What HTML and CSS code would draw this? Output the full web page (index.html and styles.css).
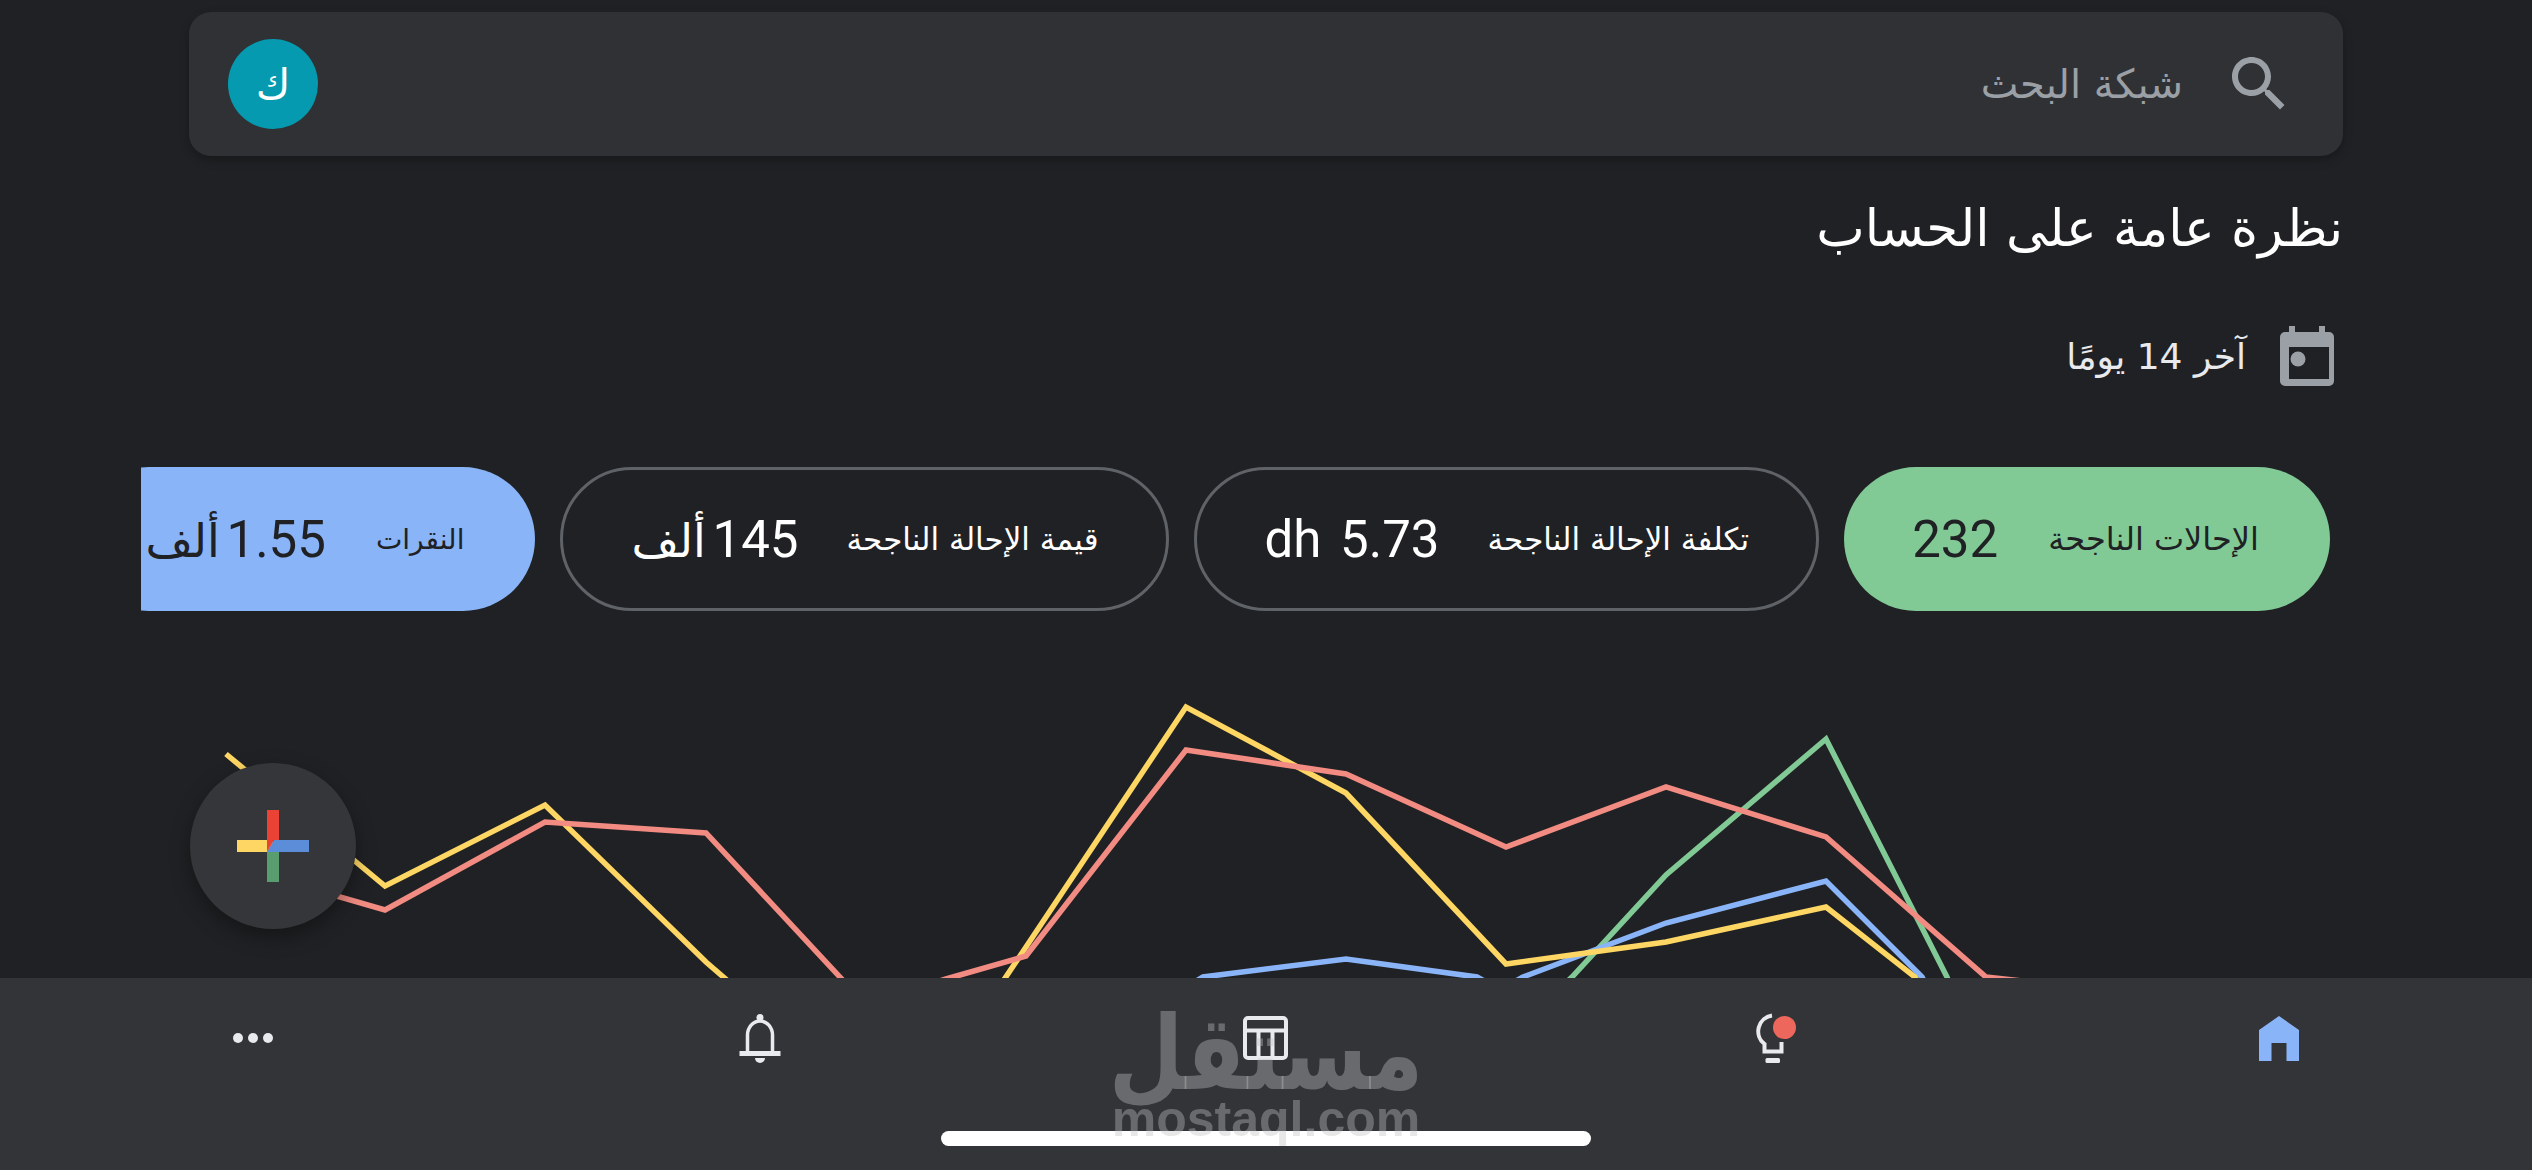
FILE: index.html
```html
<!DOCTYPE html>
<html lang="ar" dir="rtl">
<head>
<meta charset="utf-8">
<title>نظرة عامة على الحساب</title>
<link rel="stylesheet" href="styles.css">
</head>
<body>
<main class="page">
  <header class="search">
    <svg class="search-icon" viewBox="0 0 24 24"><path d="M15.5 14h-.79l-.28-.27C15.41 12.59 16 11.11 16 9.5 16 5.91 13.09 3 9.5 3S3 5.91 3 9.5 5.91 16 9.5 16c1.61 0 3.09-.59 4.23-1.57l.27.28v.79l5 4.99L20.49 19l-4.99-5zm-6 0C7.01 14 5 11.99 5 9.5S7.01 5 9.5 5 14 7.01 14 9.5 11.99 14 9.5 14z"/></svg>
    <span class="placeholder">شبكة البحث</span>
    <span class="avatar">ك</span>
  </header>
  <h1 class="title">نظرة عامة على الحساب</h1>
  <div class="date">
    <svg class="cal-icon" viewBox="0 0 54 60"><path fill-rule="evenodd" d="M9 0h6v6H39V0h6v6h4a5 5 0 0 1 5 5V55a5 5 0 0 1-5 5H5a5 5 0 0 1-5-5V11a5 5 0 0 1 5-5H9zM9 21V53H49V21z"/><circle cx="18" cy="33" r="7.5"/></svg>
    <span>آخر 14 يومًا</span>
  </div>
  <div class="chips">
    <div class="chip chip-green"><span class="label">الإحالات الناجحة</span><span class="value">232</span></div>
    <div class="chip chip-line"><span class="label">تكلفة الإحالة الناجحة</span><span class="value value-dh">5.73 dh</span></div>
    <div class="chip chip-line"><span class="label">قيمة الإحالة الناجحة</span><span class="value value-k">145 <span class="unit">ألف</span></span></div>
    <div class="chip chip-blue"><span class="label">النقرات</span><span class="value value-k">1.55 <span class="unit">ألف</span></span></div>
  </div>
  <svg class="chart" viewBox="0 690 2532 330">
    <polyline class="ln green" points="1506,1040 1572,977 1666,875 1826,739 1947,977 1986,1100"/>
    <polyline class="ln blue" points="1100,1040 1203,977 1346,959 1477,977 1500,990 1523,977 1666,923 1826,881 1922,977 1986,1100"/>
    <polyline class="ln yellow" points="226,754 385,886 545,805 706,962 866,1100 950,1060 1026,947 1186,707 1346,793 1506,964 1666,942 1826,907 1915,977 1986,1100"/>
    <polyline class="ln red" points="226,864 385,910 545,822 706,833 866,1005 946,979 1026,956 1186,750 1346,774 1506,847 1666,787 1826,837 1986,977 2060,985"/>
  </svg>
</main>

<button class="fab" aria-label="إنشاء">
  <svg class="plus" viewBox="0 0 72 72">
    <rect x="0" y="30" width="36" height="12" fill="#fdd663"/>
    <rect x="30" y="42" width="12" height="30" fill="#5a9e6f"/>
    <path d="M30 42L37 30H72V42Z" fill="#5b8dd9"/>
    <path d="M30 0H42V30L37 30L30 42Z" fill="#ea4335"/>
  </svg>
</button>

<nav class="nav">
  <svg class="nav-icon" viewBox="0 0 72 72"><g fill="#e8eaed"><circle cx="21" cy="36" r="5"/><circle cx="36" cy="36" r="5"/><circle cx="51" cy="36" r="5"/></g></svg>
  <svg class="nav-icon" viewBox="0 0 72 72"><g transform="translate(15.5 12)" fill="#e8eaed"><circle cx="20.5" cy="3.5" r="3.5"/><path d="M8 38V21a12.500 14 0 0 1 25 0V38" fill="none" stroke="#e8eaed" stroke-width="3.500"/><rect y="37" width="41" height="5"/><path d="M15.500 44h10a5 5 0 0 1-10 0z"/></g></svg>
  <svg class="nav-icon" viewBox="0 0 72 72"><g transform="translate(13 14)" fill="none" stroke="#e8eaed" stroke-width="4"><rect x="2" y="2" width="41" height="40" rx="3"/><path d="M2 14.500H43M15.500 14.500V42M29.500 14.500V42"/></g></svg>
  <svg class="nav-icon" viewBox="0 0 72 72"><g transform="translate(19 11)"><path d="M17 2.500A16 16 0 0 0 9.500 31V38.500H26.500V29" fill="none" stroke="#e8eaed" stroke-width="4"/><rect x="10.500" y="45" width="14.500" height="5" rx="1.500" fill="#e8eaed"/><circle cx="29.500" cy="14.500" r="11.500" fill="#ee675c"/></g></svg>
  <svg class="nav-icon" viewBox="0 0 72 72"><path transform="translate(16 14)" d="M20 0L40 14V45H27.500V27H12.500V45H0V14Z" fill="#8ab4f8"/></svg>
</nav>

<div class="home-bar"></div>

<div class="watermark" dir="rtl">
  <span class="wm-ar">مستقل</span>
  <span class="wm-en" dir="ltr">mostaql.com</span>
</div>
</body>
</html>
```
FILE: styles.css
```css
* { box-sizing: border-box; }
html, body { margin: 0; height: 100%; }
body {
  background: #202124;
  color: #fff;
  font-family: "DejaVu Sans", "Liberation Sans", sans-serif;
  overflow: hidden;
  position: relative;
}
.page { padding-top: 12px; }

.search {
  height: 144px;
  margin: 0 189px;
  padding: 0 48px 0 39px;
  display: flex;
  align-items: center;
  gap: 40px;
  background: #303134;
  border-radius: 22px;
  box-shadow: 0 4px 10px rgba(0, 0, 0, .25);
}
.search-icon { width: 72px; height: 72px; fill: #9aa0a6; flex: none; }
.placeholder { font-size: 40px; color: #9aa0a6; }
.avatar {
  margin-inline-start: auto;
  width: 90px;
  height: 90px;
  border-radius: 50%;
  background: #059aaf;
  display: flex;
  align-items: center;
  justify-content: center;
  font-size: 42px;
  font-weight: 400;
}

.title {
  margin: 36px 189px 0;
  font-size: 51.5px;
  line-height: 72px;
  font-weight: 400;
}

.date {
  margin: 62px 198px 0 0;
  height: 60px;
  display: flex;
  align-items: center;
  gap: 34px;
  font-size: 36px;
  color: #e8eaed;
}
.cal-icon { width: 54px; height: 60px; fill: #9aa0a6; flex: none; }

.chips {
  margin: 81px 202px 0 141px;
  display: flex;
  gap: 25px;
  overflow: hidden;
}
.chip {
  flex: none;
  height: 144px;
  padding: 0 71px 0 68px;
  border-radius: 72px;
  display: flex;
  align-items: center;
  gap: 50px;
  color: #202124;
}
.chip-green { background: #81c995; }
.chip-green .label { font-size: 32px; }
.chip-blue { background: #8ab4f8; }
.chip-blue .label { font-size: 28px; }
.chip-line { border: 3px solid #5f6368; color: #fff; padding: 0 67px 0 68px; gap: 48px; }
.label { font-size: 31px; white-space: nowrap; }
.value { font-family: Roboto, "DejaVu Sans", sans-serif; font-size: 51px; white-space: nowrap; }
.value-dh { word-spacing: 6px; }
.value-k { letter-spacing: -2px; word-spacing: -6px; }
.unit { font-size: 46px; letter-spacing: 0; }

.chart { display: block; width: 2532px; height: 330px; margin-top: 79px; }
.ln { fill: none; stroke-width: 5.5; stroke-linejoin: miter; }
.green { stroke: #81c995; }
.blue { stroke: #8ab4f8; }
.yellow { stroke: #fdd663; }
.red { stroke: #f28b82; }

.fab {
  position: absolute;
  left: 190px;
  top: 763px;
  width: 166px;
  height: 166px;
  padding: 0;
  border: 0;
  border-radius: 50%;
  background: #35363a;
  box-shadow: 0 8px 20px rgba(0, 0, 0, .35);
  display: flex;
  align-items: center;
  justify-content: center;
}
.plus { width: 72px; height: 72px; }

.nav {
  position: absolute;
  left: 0;
  right: 0;
  bottom: 0;
  height: 192px;
  padding-top: 24px;
  background: #323438;
  direction: ltr;
  display: grid;
  grid-template-columns: repeat(5, 1fr);
  justify-items: center;
  align-items: start;
}
.nav-icon { width: 72px; height: 72px; }

.home-bar {
  position: absolute;
  left: 941px;
  top: 1131px;
  width: 650px;
  height: 15px;
  border-radius: 8px;
  background: #fff;
}

.watermark {
  position: absolute;
  left: 1114px;
  top: 1018px;
  width: 304px;
  display: flex;
  flex-direction: column;
  align-items: center;
  color: rgba(192, 192, 192, .39);
  font-weight: 700;
  pointer-events: none;
}
.wm-ar { font-size: 86px; line-height: 70px; margin-bottom: 8px; white-space: nowrap; transform: scaleY(1.2); }
.wm-en { font-family: "Liberation Sans", sans-serif; font-size: 50px; line-height: 46px; white-space: nowrap; }
```
